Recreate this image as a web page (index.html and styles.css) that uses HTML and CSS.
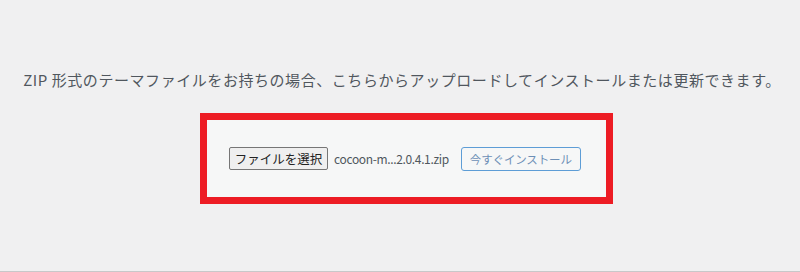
FILE: index.html
```html
<!DOCTYPE html>
<html lang="ja">

<head>
    <meta charset="UTF-8">
    <meta name="viewport" content="width=device-width, initial-scale=1.0">
    <title>テーマのアップロード</title>
    <link rel="stylesheet" href="styles.css">
</head>

<body>
    <div class="upload-theme">
        <p class="install-help">ZIP 形式のテーマファイルをお持ちの場合、こちらからアップロードしてインストールまたは更新できます。</p>
        <div class="highlight">
            <form class="upload-form" action="#">
                <span class="file-btn">ファイルを選択</span>
                <span class="file-name">cocoon-m...2.0.4.1.zip</span>
                <button class="install-btn" type="button">今すぐインストール</button>
            </form>
        </div>
    </div>
</body>

</html>
```

FILE: styles.css
```css
* {
    margin: 0;
    padding: 0;
    box-sizing: border-box;
}

body {
    background: #f0f0f1;
    font-family: "Noto Sans CJK JP", "Liberation Sans", sans-serif;
    color: #50575e;
}

.upload-theme {
    height: 272px;
    border-bottom: 1px solid #c8c8c9;
    display: flex;
    flex-direction: column;
    align-items: center;
}

.install-help {
    margin-top: 68px;
    margin-left: 4px;
    font-size: 15px;
    line-height: 24px;
    letter-spacing: 0.56px;
    white-space: nowrap;
}

.highlight {
    margin-top: 21px;
    margin-left: 13px;
    width: 413px;
    height: 91px;
    border: 7px solid #ed1c24;
}

.upload-form {
    height: 100%;
    background: #f6f7f7;
    display: flex;
    align-items: center;
    padding-left: 22px;
}

.file-btn {
    width: 99px;
    height: 23px;
    line-height: 21px;
    text-align: center;
    font-size: 12.5px;
    color: #222;
    background: #efefef;
    border: 1px solid #767676;
    border-radius: 2px;
}

.file-name {
    margin-left: 6px;
    font-size: 12px;
    letter-spacing: -0.35px;
    color: #50575e;
}

.install-btn {
    margin-left: 12px;
    width: 120px;
    height: 24px;
    font-family: inherit;
    font-size: 11.5px;
    letter-spacing: -0.15px;
    color: #6d8fb6;
    background: #f6f7f7;
    border: 1px solid #5d9dd6;
    border-radius: 3px;
}
```
